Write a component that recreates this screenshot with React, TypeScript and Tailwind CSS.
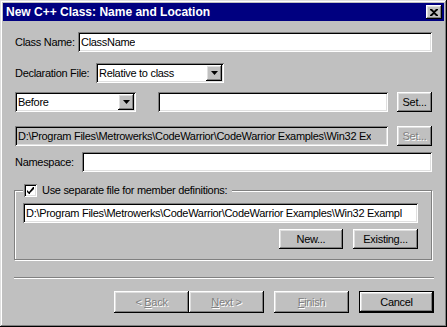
import React from 'react';

const raised =
  'shadow-[inset_-1px_-1px_#000000,inset_1px_1px_#ffffff,inset_-2px_-2px_#808080,inset_2px_2px_#dfdfdf]';
const sunken =
  'shadow-[inset_1px_1px_#808080,inset_-1px_-1px_#ffffff,inset_2px_2px_#000000,inset_-2px_-2px_#dfdfdf]';

function Field({ value = '', width, disabled = false }: { value?: string; width: string; disabled?: boolean }) {
  return (
    <div
      className={`${width} h-[20px] ${sunken} ${disabled ? 'bg-[#c0c0c0]' : 'bg-white'} flex items-center overflow-hidden whitespace-nowrap pl-[3px] pr-[2px] text-black`}
    >
      <span className="overflow-hidden">{value}</span>
    </div>
  );
}

function ArrowButton() {
  return (
    <div className={`w-[16px] h-[16px] bg-[#c0c0c0] ${raised} flex items-center justify-center`}>
      <svg width="7" height="4" viewBox="0 0 7 4">
        <path d="M0 0h7L3.5 4z" fill="#000" />
      </svg>
    </div>
  );
}

function Select({ value, width }: { value: string; width: string }) {
  return (
    <div className={`${width} h-[20px] ${sunken} bg-white flex items-center p-[2px]`}>
      <span className="flex-1 pl-[1px] whitespace-nowrap">{value}</span>
      <ArrowButton />
    </div>
  );
}

function Button({
  children,
  width,
  height = 'h-[21px]',
  disabled = false,
  isDefault = false,
}: {
  children: React.ReactNode;
  width: string;
  height?: string;
  disabled?: boolean;
  isDefault?: boolean;
}) {
  return (
    <div
      className={`${width} ${height} bg-[#c0c0c0] flex items-center justify-center ${
        isDefault
          ? 'border border-black shadow-[inset_-1px_-1px_#000000,inset_1px_1px_#ffffff,inset_-2px_-2px_#808080,inset_2px_2px_#dfdfdf]'
          : raised
      } ${disabled ? 'text-[#808080] [text-shadow:1px_1px_0_#ffffff]' : 'text-black'}`}
    >
      {children}
    </div>
  );
}

export default function App() {
  return (
    <div
      className={`w-[447px] h-[327px] bg-[#c0c0c0] text-[11px] tracking-[-0.3px] leading-none text-black shadow-[inset_-1px_-1px_#000000,inset_1px_1px_#dfdfdf,inset_-2px_-2px_#808080,inset_2px_2px_#ffffff] p-[3px] flex flex-col overflow-hidden`}
      style={{ fontFamily: '"Liberation Sans", Arial, sans-serif' }}
    >
      {/* title bar */}
      <div className="h-[18px] bg-[#000080] flex items-center pl-[3px] pr-[2px]">
        <span className="flex-1 text-white font-bold text-[12px] tracking-normal whitespace-nowrap">
          New C++ Class: Name and Location
        </span>
        <div className={`w-[16px] h-[14px] bg-[#c0c0c0] ${raised} flex items-center justify-center`}>
          <svg width="8" height="7" viewBox="0 0 8 7">
            <path d="M0 0h2l2 2 2-2h2v1L5 3.5 8 6v1H6L4 5 2 7H0V6l3-2.5L0 1z" fill="#000" />
          </svg>
        </div>
      </div>

      <div className="flex flex-col pl-[12px] pr-[12px]">
        {/* class name */}
        <div className="mt-[11px] flex items-center h-[20px]">
          <span className="w-[63px]">Class Name:</span>
          <Field value="ClassName" width="flex-1" />
        </div>

        {/* declaration file */}
        <div className="mt-[11px] flex items-center h-[20px]">
          <span className="w-[81px]">Declaration File:</span>
          <Select value="Relative to class" width="w-[128px]" />
        </div>

        {/* before row */}
        <div className="mt-[9px] flex items-center h-[20px]">
          <Select value="Before" width="w-[121px]" />
          <div className="ml-[22px]">
            <Field width="w-[230px]" />
          </div>
          <div className="ml-[9px]">
            <Button width="w-[35px]" height="h-[20px]">Set...</Button>
          </div>
        </div>

        {/* location */}
        <div className="mt-[14px] flex items-center h-[20px]">
          <Field
            width="w-[373px]"
            disabled
            value="D:\Program Files\Metrowerks\CodeWarrior\CodeWarrior Examples\Win32 Ex"
          />
          <div className="ml-[9px]">
            <Button width="w-[35px]" height="h-[20px]" disabled>
              Set...
            </Button>
          </div>
        </div>

        {/* namespace */}
        <div className="mt-[6px] flex items-center h-[20px]">
          <span className="w-[67px]">Namespace:</span>
          <Field width="flex-1" />
        </div>

        {/* group box */}
        <div className="relative mt-[18px] -ml-[1px] border border-[#808080] shadow-[inset_1px_1px_#ffffff,1px_1px_#ffffff] pt-[12px] pl-[8px] pr-[13px] pb-[10px]">
          <div className="absolute -top-[7px] left-[8px] flex items-center bg-[#c0c0c0] pr-[5px] pl-[1px]">
            <div className={`w-[13px] h-[13px] bg-white ${sunken} flex items-center justify-center`}>
              <svg width="7" height="7" viewBox="0 0 7 7">
                <path d="M6 0h1v2L3 6V7H2L0 5V3l2 2z" fill="#000" />
              </svg>
            </div>
            <span className="ml-[5px] whitespace-nowrap">Use separate file for member definitions:</span>
          </div>
          <Field
            width="w-full"
            value="D:\Program Files\Metrowerks\CodeWarrior\CodeWarrior Examples\Win32 Exampl"
          />
          <div className="mt-[6px] flex justify-end gap-[10px]">
            <Button width="w-[64px]" height="h-[20px]">New...</Button>
            <Button width="w-[65px]" height="h-[20px]">Existing...</Button>
          </div>
        </div>

        {/* separator */}
        <div className="mt-[17px] -ml-[1px] -mr-[2px] h-[2px] border-t border-[#808080] border-b border-b-white" />

        {/* wizard buttons */}
        <div className="mt-[12px] -mr-[2px] flex justify-end">
          <Button width="w-[75px]" height="h-[22px]" disabled>
            <span>
              &lt; <u>B</u>ack
            </span>
          </Button>
          <Button width="w-[75px]" height="h-[22px]" disabled>
            <span>
              <u>N</u>ext &gt;
            </span>
          </Button>
          <div className="ml-[10px]">
            <Button width="w-[75px]" height="h-[22px]" disabled>
              <span>
                <u>F</u>inish
              </span>
            </Button>
          </div>
          <div className="ml-[10px]">
            <Button width="w-[75px]" height="h-[22px]" isDefault>
              Cancel
            </Button>
          </div>
        </div>
      </div>
    </div>
  );
}
